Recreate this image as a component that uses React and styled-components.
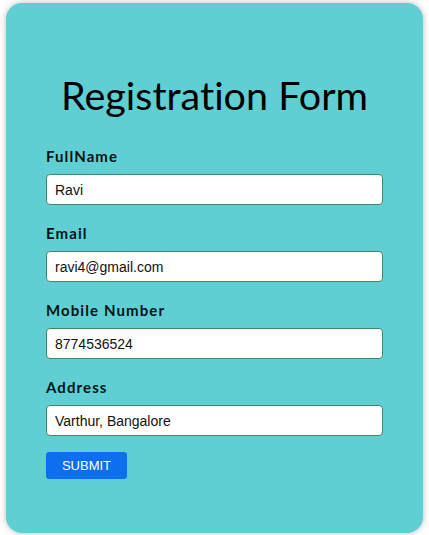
import React from "react";
import styled, { createGlobalStyle } from "styled-components";

const Global = createGlobalStyle`
  html, body { margin: 0; padding: 0; background: #ffffff; }
  body { font-family: "Liberation Sans", Arial, sans-serif; }
`;

const Page = styled.div`
  padding: 3px 6px 2px 6px;
`;

const Card = styled.form`
  box-sizing: border-box;
  width: 417px;
  height: 530px;
  background: #5fcfd4;
  border-radius: 16px;
  box-shadow: 0 0 6px rgba(0, 0, 0, 0.28);
  padding: 69px 40px 0 40px;
  display: flex;
  flex-direction: column;
`;

const Title = styled.h1`
  margin: 0 0 31px 0;
  text-align: center;
  font-family: Lato, "Noto Sans", sans-serif;
  font-weight: 400;
  font-size: 39.5px;
  line-height: 46px;
  font-variant-ligatures: none;
  color: #000;
`;

const Field = styled.div`
  display: flex;
  flex-direction: column;
  gap: 10px;
  margin-bottom: 21px;
`;

const Label = styled.label`
  font-family: Lato, "Noto Sans", sans-serif;
  font-weight: 700;
  font-size: 15px;
  line-height: 15px;
  letter-spacing: 1.1px;
  color: #061414;
`;

const Input = styled.input`
  box-sizing: border-box;
  width: 337px;
  height: 31px;
  border: 1px solid #3f8a63;
  border-radius: 4px;
  background: #fff;
  padding: 0 8px;
  font-family: "Liberation Sans", Arial, sans-serif;
  font-size: 14px;
  color: #111;
  outline: none;
`;

const Button = styled.button`
  align-self: flex-start;
  width: 81px;
  height: 27px;
  margin-top: -5px;
  border: none;
  border-radius: 3px;
  background: #0d6ef0;
  color: #fff;
  font-family: "Liberation Sans", Arial, sans-serif;
  font-size: 13px;
  padding: 0;
  cursor: pointer;
`;

const fields = [
  { label: "FullName", value: "Ravi" },
  { label: "Email", value: "ravi4@gmail.com" },
  { label: "Mobile Number", value: "8774536524" },
  { label: "Address", value: "Varthur, Bangalore" },
];

export default function App() {
  return (
    <>
      <Global />
      <Page>
        <Card onSubmit={(e) => e.preventDefault()}>
          <Title>Registration Form</Title>
          {fields.map((f) => (
            <Field key={f.label}>
              <Label>{f.label}</Label>
              <Input defaultValue={f.value} />
            </Field>
          ))}
          <Button type="submit">SUBMIT</Button>
        </Card>
      </Page>
    </>
  );
}
